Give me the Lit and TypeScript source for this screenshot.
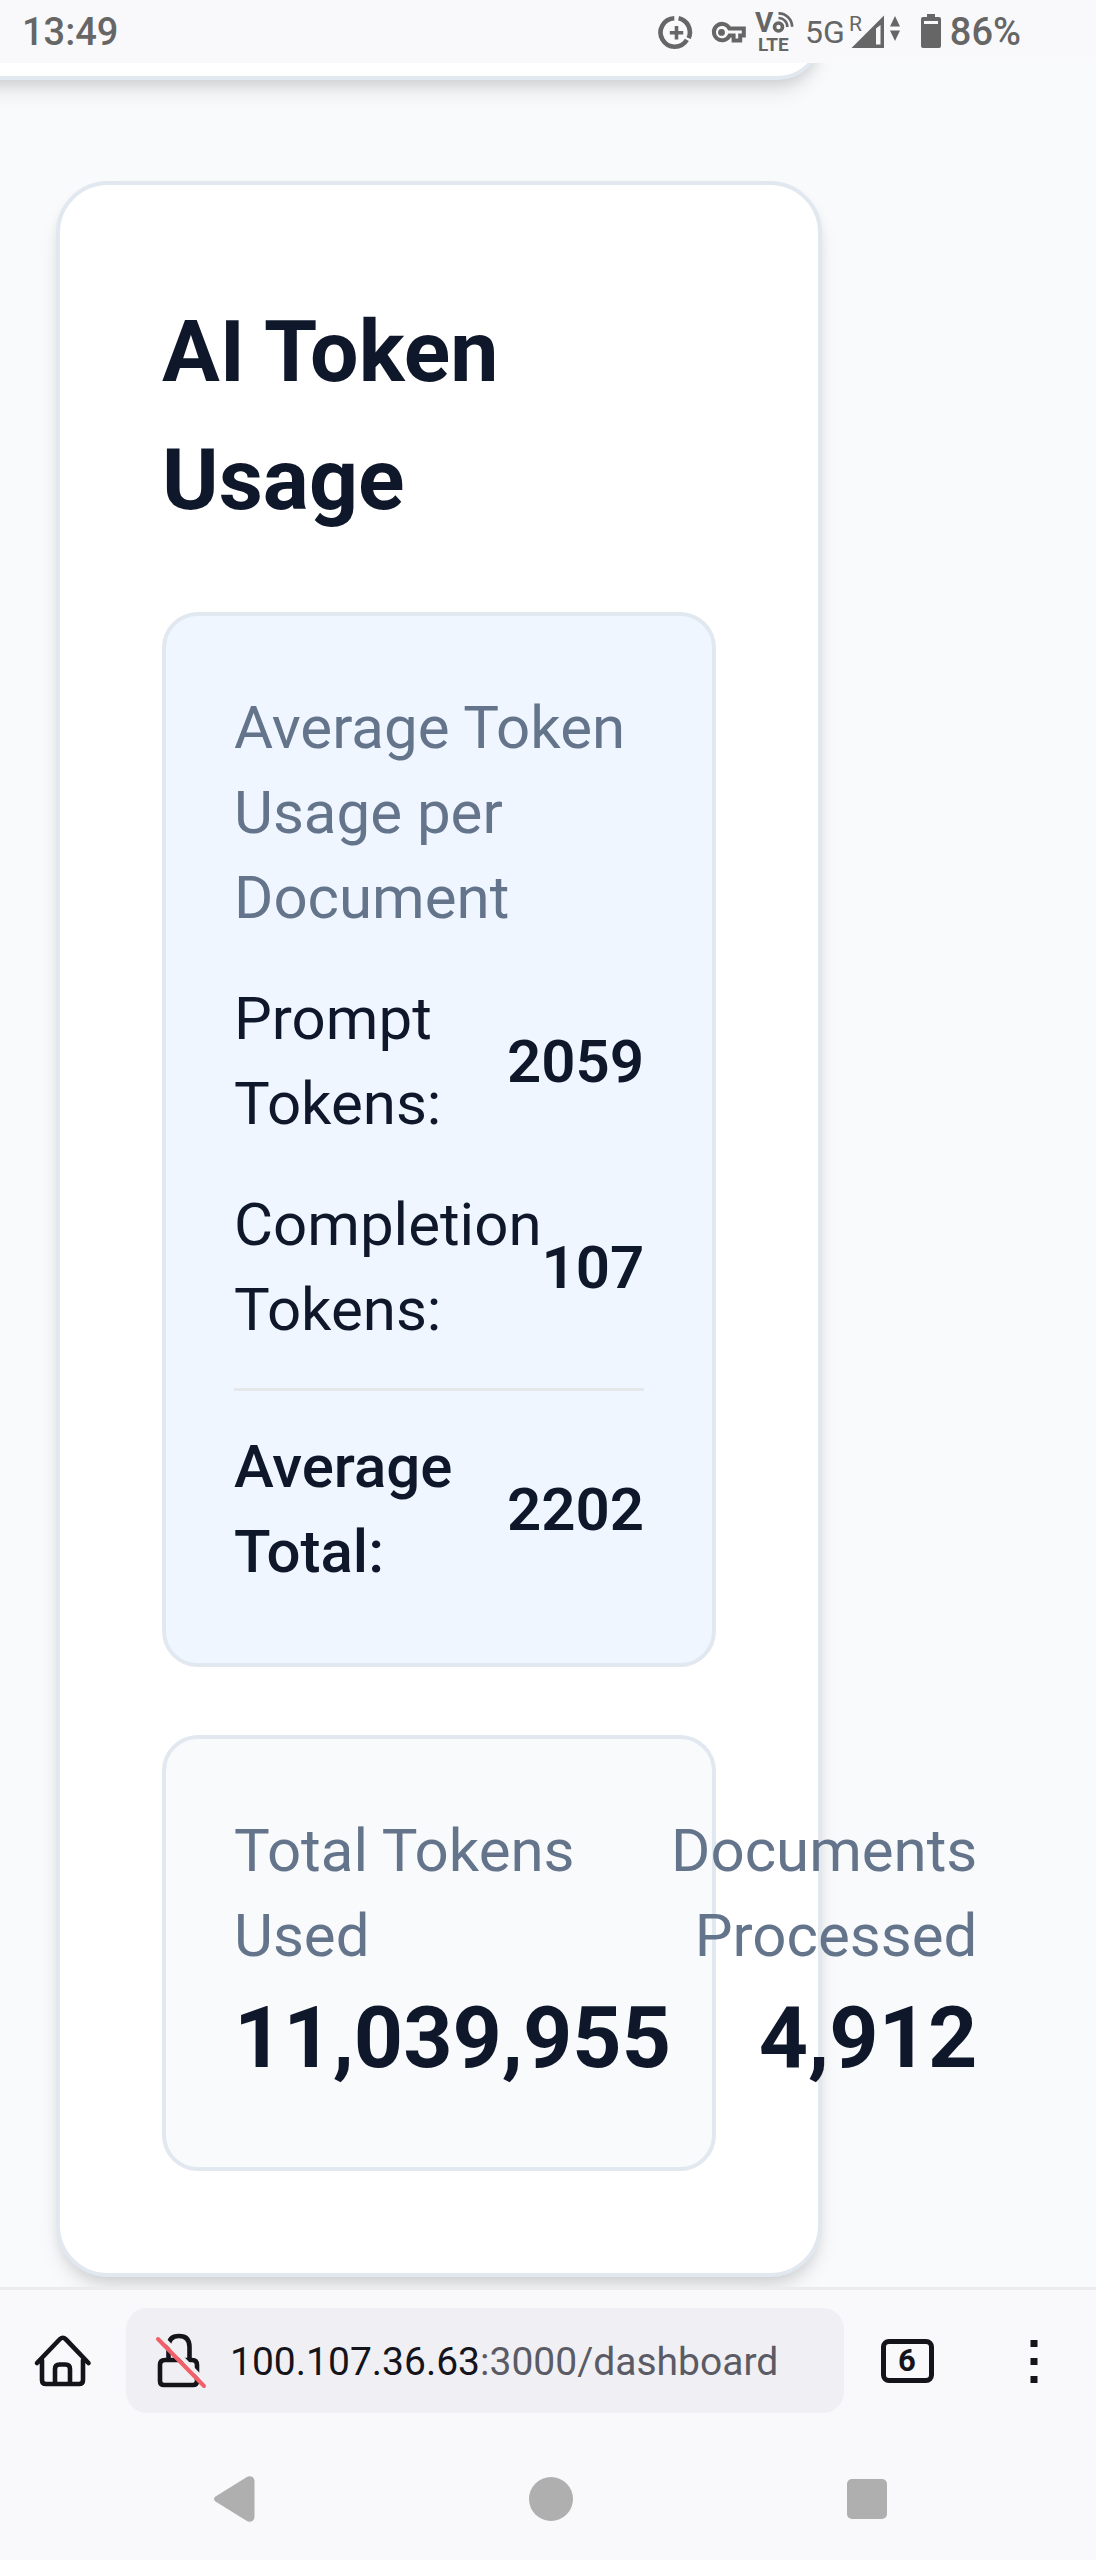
import { LitElement, html, css, svg } from "lit";
import { customElement, property } from "lit/decorators.js";

interface TokenRow {
  label: string;
  value: string;
  total?: boolean;
}

const AVERAGES: TokenRow[] = [
  { label: "Prompt Tokens:", value: "2059" },
  { label: "Completion Tokens:", value: "107" },
  { label: "Average Total:", value: "2202", total: true },
];

@customElement("status-bar")
class StatusBar extends LitElement {
  static styles = css`
    :host {
      display: flex;
      align-items: center;
      height: 63px;
      padding: 0 75px 0 22px;
      background: #f9f9fb;
      color: #666666;
      font-size: 38px;
      font-weight: 500;
      line-height: 45px;
    }
    .label {
      padding-top: 2px;
    }
    .icons {
      display: flex;
      align-items: center;
      margin-left: auto;
    }
    .glyphs {
      display: block;
      width: 294px;
      height: 63px;
      fill: none;
      stroke: #666666;
    }
    .solid {
      fill: #666666;
      stroke: none;
    }
    .paper {
      fill: #f9f9fb;
      stroke: none;
    }
    .v {
      font-size: 28px;
      font-weight: 700;
    }
    .lte {
      font-size: 19px;
      font-weight: 700;
    }
    .net {
      font-size: 32px;
      font-weight: 400;
    }
    .roam {
      font-size: 21px;
      font-weight: 400;
    }
  `;

  render() {
    return html`
      <span class="label">13:49</span>
      <div class="icons">
        <svg class="glyphs" viewBox="656 0 294 63" aria-hidden="true">
          ${svg`
            <path stroke-width="4.6" d="M674.3 18.3a14.2 14.2 0 1 0 12.6 21.6M688.6 38.1a14.2 14.2 0 0 0-10-19.8" />
            <path stroke-width="3.6" d="M676.5 26v13.4M669.8 32.7h13.4" />
            <path stroke-width="4" stroke-linejoin="miter" d="M729.5 28.6h14.3v7h-3.6v5h-6.6v-5h-4.1a8.2 8.2 0 1 1 0-7z" />
            <circle class="solid" cx="721.5" cy="32.4" r="3.4" />
            <text class="solid v" x="755" y="32">V</text>
            <circle cx="778.5" cy="27" r="4" stroke-width="3.6" />
            <path stroke-width="2.6" d="M778.5 18a8.6 8.6 0 0 1 8.8 9M778.5 13.4a13.4 13.4 0 0 1 13.6 13.4" />
            <text class="solid lte" x="758" y="51">LTE</text>
            <text class="solid net" x="805" y="43">5G</text>
            <text class="solid roam" x="849" y="31">R</text>
            <path class="solid" d="M884 15.500v32.500h-32.500z" />
            <path class="paper" d="M876 28.500l4.500-3.500v19.500h-4.500z" />
            <path class="solid" d="M895 16l5 10.500h-10zM895 41l5-10.500h-10z" />
            <path class="solid" d="M927 14h8v3h4a2 2 0 0 1 2 2v27a2 2 0 0 1-2 2h-16a2 2 0 0 1-2-2v-27a2 2 0 0 1 2-2h4z" />
            <path class="paper" d="M924 21h14v3h-14z" />
          `}
        </svg>
        <span class="label">86%</span>
      </div>
    `;
  }
}

@customElement("token-average")
class TokenAverage extends LitElement {
  @property({ attribute: false }) rows: TokenRow[] = [];

  static styles = css`
    :host {
      display: flex;
      flex-direction: column;
      gap: 36px;
      padding: 69px 68px;
      border: 4px solid #e2e8f0;
      border-radius: 36px;
      background: #eff6ff;
      font-size: 60px;
      line-height: 85px;
    }
    .caption {
      margin: 0;
      font: inherit;
      color: #64748b;
    }
    .row {
      display: flex;
      justify-content: space-between;
      align-items: center;
    }
    .value {
      font-weight: 600;
    }
    .total {
      padding-top: 33px;
      border-top: 3px solid #e5e7eb;
      font-weight: 500;
    }
  `;

  render() {
    return html`
      <h3 class="caption">Average Token Usage per Document</h3>
      ${this.rows.map(
        (row) => html`
          <div class="row ${row.total ? "total" : ""}">
            <span>${row.label}</span>
            <span class="value">${row.value}</span>
          </div>
        `,
      )}
    `;
  }
}

@customElement("token-totals")
class TokenTotals extends LitElement {
  static styles = css`
    :host {
      display: flex;
      justify-content: space-between;
      padding: 69px 68px;
      border: 4px solid #e2e8f0;
      border-radius: 36px;
      background: #f8fafc;
      font-size: 60px;
      line-height: 85px;
    }
    .stat {
      color: #64748b;
    }
    .end {
      text-align: right;
    }
    .figure {
      color: #0f172a;
      font-size: 86px;
      font-weight: 700;
      line-height: 120px;
    }
  `;

  render() {
    return html`
      <div class="stat">
        <div>Total Tokens Used</div>
        <div class="figure">11,039,955</div>
      </div>
      <div class="stat end">
        <div>Documents Processed</div>
        <div class="figure">4,912</div>
      </div>
    `;
  }
}

@customElement("browser-bar")
class BrowserBar extends LitElement {
  static styles = css`
    :host {
      display: flex;
      align-items: center;
      padding: 18px 0;
      border-top: 3px solid #ebebed;
      background: #f9f9fb;
      color: #15141a;
    }
    .tool {
      display: flex;
      justify-content: center;
      align-items: center;
      width: 126px;
      height: 105px;
      padding: 0;
      border: 0;
      background: none;
      color: inherit;
      font: inherit;
    }
    .icon {
      display: block;
      width: 60px;
      height: 60px;
      fill: none;
      stroke: currentColor;
      stroke-width: 4.6;
      stroke-linejoin: round;
      stroke-linecap: round;
    }
    .slash {
      stroke: #f25f68;
      stroke-width: 4;
    }
    .gap {
      stroke: #f0f0f4;
      stroke-width: 4;
    }
    .address {
      display: flex;
      flex: 1;
      align-items: center;
      gap: 20px;
      height: 105px;
      padding: 0 24px;
      border-radius: 21px;
      background: #f0f0f4;
      color: #5b5b66;
      font-size: 39px;
      line-height: 46px;
      text-decoration: none;
    }
    .url {
      padding-top: 2px;
    }
    .host {
      color: #15141a;
    }
    .tabs {
      display: flex;
      justify-content: center;
      align-items: center;
      box-sizing: border-box;
      width: 53px;
      height: 44px;
      border: 5px solid #15141a;
      border-radius: 8px;
      font-size: 31px;
      font-weight: 700;
      line-height: 34px;
    }
    .dots {
      fill: currentColor;
      stroke: none;
    }
  `;

  render() {
    return html`
      <button class="tool" aria-label="Home">
        <svg class="icon" viewBox="34 2331 60 60">
          <path d="M38 2363l22.500-23.500q3-3.500 6.500 0L89.500 2363M43 2360v20q0 4 4 4h33q4 0 4-4v-20M56 2383v-14q0-4.500 4.500-4.500h6q4.500 0 4.500 4.500v14" />
        </svg>
      </button>
      <a class="address" href="http://100.107.36.63:3000/dashboard">
        <svg class="icon" viewBox="150 2331 60 60" color="#15141a">
          <path d="M168.500 2360v-13q0-11 10.500-11t10.500 11v13M160 2365q0-5 5-5h27q5 0 5 5v16q0 4-4 4h-29q-4 0-4-4z" />
          <path class="gap" d="M161.500 2336.500l46 47.500" />
          <path class="slash" d="M158 2339l46 47" />
        </svg>
        <span class="url"><span class="host">100.107.36.63</span>:3000/dashboard</span>
      </a>
      <button class="tool" aria-label="Tabs"><span class="tabs">6</span></button>
      <button class="tool" aria-label="Menu">
        <svg class="icon" viewBox="0 0 60 60">
          <path class="dots" d="M27.500 9h7v7h-7zM27.500 27h7v7h-7zM27.500 45h7v7h-7z" />
        </svg>
      </button>
    `;
  }
}

@customElement("system-nav")
class SystemNav extends LitElement {
  static styles = css`
    :host {
      display: grid;
      grid-template-columns: repeat(3, 1fr);
      height: 129px;
      padding: 0 71px 0 77px;
      background: #f9f9fb;
    }
    .key {
      display: flex;
      justify-content: center;
      align-items: center;
      padding: 6px 0 0;
      border: 0;
      background: none;
    }
    .shape {
      display: block;
      width: 48px;
      height: 48px;
      fill: #afafaf;
    }
  `;

  render() {
    return html`
      <button class="key" aria-label="Back">
        <svg class="shape" viewBox="0 0 48 48">
          <path d="M4.500 21.500 L35.500 2.200 Q38.500 .5 41.500 2 Q43.500 3.500 43.500 6 V42 Q43.500 44.500 41.500 46 Q38.500 47.500 35.500 45.800 L4.500 26.500 Q1.500 24 4.500 21.500z" />
        </svg>
      </button>
      <button class="key" aria-label="Home">
        <svg class="shape" viewBox="0 0 48 48"><circle cx="24" cy="24" r="22" /></svg>
      </button>
      <button class="key" aria-label="Recent apps">
        <svg class="shape" viewBox="0 0 48 48"><rect x="4" y="4" width="40" height="40" rx="5" /></svg>
      </button>
    `;
  }
}

@customElement("app-root")
class AppRoot extends LitElement {
  static styles = css`
    :host {
      display: flex;
      flex-direction: column;
      min-height: 100vh;
      font-family: Roboto, "Liberation Sans", sans-serif;
      color: #0f172a;
    }
    .page {
      flex: 1;
      overflow: hidden;
      padding: 0 25% 10px 56px;
      background: #f8fafc;
    }
    .card {
      border: 4px solid #e2e8f0;
      border-radius: 52px;
      background: #ffffff;
      box-shadow:
        0 14px 21px -4px rgba(0, 0, 0, 0.1),
        0 7px 14px -4px rgba(0, 0, 0, 0.1);
    }
    .previous {
      height: 80px;
      margin: -71px 0 101px -120px;
    }
    .usage {
      display: flex;
      flex-direction: column;
      gap: 68px;
      padding: 103px 102px 102px;
    }
    .title {
      margin: 0;
      font-size: 86px;
      font-weight: 700;
      line-height: 128px;
    }
  `;

  render() {
    return html`
      <status-bar></status-bar>
      <main class="page">
        <div class="card previous"></div>
        <section class="card usage">
          <h2 class="title">AI Token Usage</h2>
          <token-average .rows=${AVERAGES}></token-average>
          <token-totals></token-totals>
        </section>
      </main>
      <browser-bar></browser-bar>
      <system-nav></system-nav>
    `;
  }
}
